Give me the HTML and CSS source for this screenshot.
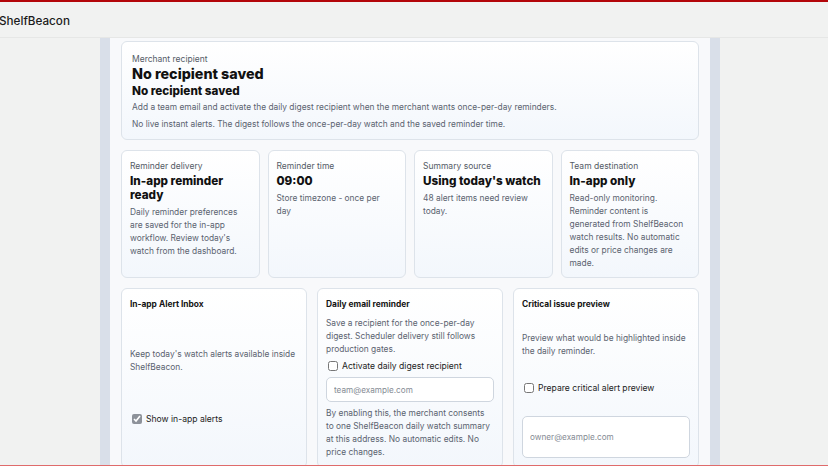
FILE: index.html
```html
<!DOCTYPE html>
<html lang="en">
<head>
    <meta charset="UTF-8">
    <title>ShelfBeacon - Reminders</title>
    <link rel="stylesheet" href="styles.css">
</head>
<body>

    <header class="topbar">
        <span class="brand">ShelfBeacon</span>
    </header>

    <main class="panel">

        <section class="card hero">
            <p class="label">Merchant recipient</p>
            <h1>No recipient saved</h1>
            <h2>No recipient saved</h2>
            <p class="body">Add a team email and activate the daily digest recipient when the merchant wants once-per-day reminders.</p>
            <p class="body">No live instant alerts. The digest follows the once-per-day watch and the saved reminder time.</p>
        </section>

        <section class="stats">
            <div class="card stat">
                <p class="label">Reminder delivery</p>
                <h3>In-app reminder ready</h3>
                <p class="body">Daily reminder preferences are saved for the in-app workflow. Review today's watch from the dashboard.</p>
            </div>
            <div class="card stat">
                <p class="label">Reminder time</p>
                <h3>09:00</h3>
                <p class="body">Store timezone - once per day</p>
            </div>
            <div class="card stat">
                <p class="label">Summary source</p>
                <h3>Using today's watch</h3>
                <p class="body">48 alert items need review today.</p>
            </div>
            <div class="card stat">
                <p class="label">Team destination</p>
                <h3>In-app only</h3>
                <p class="body">Read-only monitoring. Reminder content is generated from ShelfBeacon watch results. No automatic edits or price changes are made.</p>
            </div>
        </section>

        <section class="options">
            <div class="card option inbox">
                <h4>In-app Alert Inbox</h4>
                <p class="body">Keep today's watch alerts available inside ShelfBeacon.</p>
                <label class="check locked"><input type="checkbox" checked onclick="return false"> Show in-app alerts</label>
            </div>
            <div class="card option email">
                <h4>Daily email reminder</h4>
                <p class="body intro">Save a recipient for the once-per-day digest. Scheduler delivery still follows production gates.</p>
                <label class="check"><input type="checkbox"> Activate daily digest recipient</label>
                <input class="field" type="email" placeholder="team@example.com">
                <p class="body consent">By enabling this, the merchant consents to one ShelfBeacon daily watch summary at this address. No automatic edits. No price changes.</p>
            </div>
            <div class="card option critical">
                <h4>Critical issue preview</h4>
                <p class="body">Preview what would be highlighted inside the daily reminder.</p>
                <label class="check"><input type="checkbox"> Prepare critical alert preview</label>
                <input class="field tall" type="email" placeholder="owner@example.com">
            </div>
        </section>

    </main>

    <div class="bottom-line"></div>

</body>
</html>
```

FILE: styles.css
```css
* {
    box-sizing: border-box;
}

body {
    margin: 0;
    font-family: Inter, "Noto Sans", sans-serif;
    background-color: #f1f2f1;
    color: #111;
    border-top: 2px solid #b3060a;
}

.topbar {
    height: 36px;
    padding-top: 3px;
    display: flex;
    align-items: center;
    border-bottom: 1px solid #e6e7e6;
}

    .topbar .brand {
        font-size: 11.7px;
        font-weight: 500;
        color: #1b1b1b;
        margin-left: -1px;
    }

.panel {
    width: 620px;
    margin: 0 0 0 100px;
    padding: 3px 11px 20px;
    background: #f8f9fb;
    border-left: 10px solid #d9dfe9;
    border-right: 10px solid #d9dfe9;
    display: flex;
    flex-direction: column;
    gap: 10px;
}

.card {
    background: linear-gradient(180deg, #ffffff 0%, #f3f7fc 100%);
    border: 1px solid #dde3ea;
    border-radius: 6px;
}

p, h1, h2, h3, h4 {
    margin: 0;
}

.label {
    font-size: 8.5px;
    color: #545b66;
    line-height: 13px;
}

.body {
    font-size: 8.4px;
    color: #5b6370;
    line-height: 13px;
}

/* merchant recipient */
.hero {
    padding: 11px 10px 8px;
}

    .hero h1 {
        font-size: 14.3px;
        font-weight: 800;
        line-height: 16px;
    }

    .hero h2 {
        font-size: 11.7px;
        font-weight: 800;
        line-height: 18px;
        margin-bottom: 1px;
    }

    .hero .body + .body {
        margin-top: 4px;
    }

/* stat cards */
.stats {
    display: grid;
    grid-template-columns: repeat(4, 1fr);
    gap: 8px;
}

.stat {
    padding: 9px 9px 7px 8px;
}

    .stat h3 {
        font-size: 11.7px;
        font-weight: 800;
        line-height: 14px;
        margin: 1px 0 4px;
    }

    .stat .body {
        margin-right: 3px;
    }

/* option cards */
.options {
    display: grid;
    grid-template-columns: repeat(3, 1fr);
    gap: 10px;
}

.option {
    padding: 9px 8px 8px;
    display: flex;
    flex-direction: column;
}

    .option h4 {
        font-size: 8.4px;
        font-weight: 700;
        line-height: 13px;
        color: #151515;
    }

.inbox {
    gap: 37px;
}

    .inbox .check {
        margin-top: 1px;
    }

.email .intro {
    margin: 6px 0 3px;
}

.email .field {
    margin: 5px 0;
}

.critical {
    gap: 21px;
}

    .critical .check {
        margin-top: 2px;
    }

    .critical .field {
        margin-top: 1px;
    }

.check {
    display: flex;
    align-items: center;
    gap: 4px;
    height: 13px;
    font-size: 8.6px;
    color: #222;
}

    .check input {
        margin: 0 0 0 2px;
        width: 10px;
        height: 10px;
    }

    .check.locked input {
        accent-color: #8d929a;
    }

.field {
    height: 25px;
    flex-shrink: 0;
    border: 1px solid #cfd6df;
    border-radius: 5px;
    background: #fff;
    padding: 0 7px;
    font-family: inherit;
    font-size: 8.2px;
}

    .field::placeholder {
        color: #858b94;
    }

    .field.tall {
        height: 42px;
    }

.bottom-line {
    position: fixed;
    left: 0;
    right: 0;
    bottom: 0;
    height: 1px;
    background: #df6b6b;
}
```
